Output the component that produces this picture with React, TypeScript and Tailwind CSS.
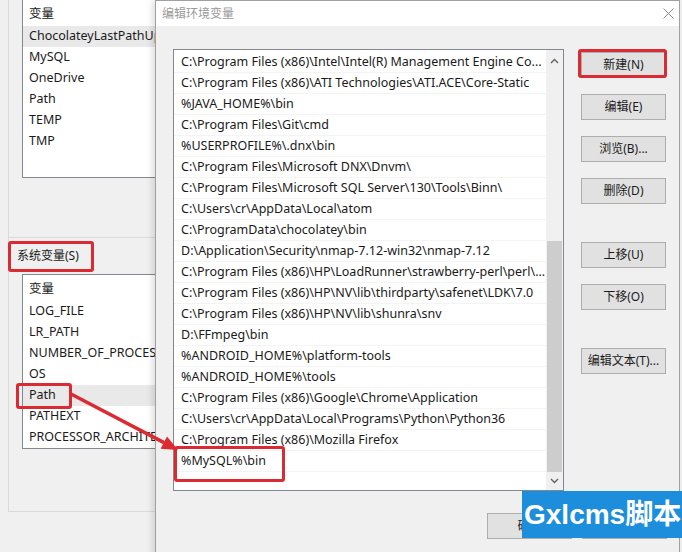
import React from 'react';

const userVars = ['ChocolateyLastPathUpdate', 'MySQL', 'OneDrive', 'Path', 'TEMP', 'TMP'];
const sysVars = ['LOG_FILE', 'LR_PATH', 'NUMBER_OF_PROCESSORS', 'OS', 'Path', 'PATHEXT', 'PROCESSOR_ARCHITECTURE'];

const paths = [
  'C:\\Program Files (x86)\\Intel\\Intel(R) Management Engine Co...',
  'C:\\Program Files (x86)\\ATI Technologies\\ATI.ACE\\Core-Static',
  '%JAVA_HOME%\\bin',
  'C:\\Program Files\\Git\\cmd',
  '%USERPROFILE%\\.dnx\\bin',
  'C:\\Program Files\\Microsoft DNX\\Dnvm\\',
  'C:\\Program Files\\Microsoft SQL Server\\130\\Tools\\Binn\\',
  'C:\\Users\\cr\\AppData\\Local\\atom',
  'C:\\ProgramData\\chocolatey\\bin',
  'D:\\Application\\Security\\nmap-7.12-win32\\nmap-7.12',
  'C:\\Program Files (x86)\\HP\\LoadRunner\\strawberry-perl\\perl\\...',
  'C:\\Program Files (x86)\\HP\\NV\\lib\\thirdparty\\safenet\\LDK\\7.0',
  'C:\\Program Files (x86)\\HP\\NV\\lib\\shunra\\snv',
  'D:\\FFmpeg\\bin',
  '%ANDROID_HOME%\\platform-tools',
  '%ANDROID_HOME%\\tools',
  'C:\\Program Files (x86)\\Google\\Chrome\\Application',
  'C:\\Users\\cr\\AppData\\Local\\Programs\\Python\\Python36',
  'C:\\Program Files (x86)\\Mozilla Firefox',
  '%MySQL%\\bin',
];

// 背景窗口里的变量列表
const VarList = ({ items, selected, height }: { items: string[]; selected: string; height: string }) => (
  <div className={`w-[220px] bg-white border border-[#828790] pt-[2px] ${height}`}>
    <div className="h-[24px] flex items-center pl-[6px]">变量</div>
    {items.map((v) => (
      <div
        key={v}
        className={`h-[21px] flex items-center pl-[6px] whitespace-nowrap ${v === selected ? 'bg-[#e9e9e9]' : ''}`}
      >
        {v}
      </div>
    ))}
  </div>
);

const Btn = ({ label }: { label: string }) => (
  <div className="w-[85px] h-[26px] flex items-center justify-center bg-[#e1e1e1] border border-[#adadad] whitespace-nowrap text-[12px]">
    {label}
  </div>
);

const Chevron = ({ up }: { up?: boolean }) => (
  <svg width="9" height="6" viewBox="0 0 9 6">
    <path d={up ? 'M1 5 L4.5 1.5 L8 5' : 'M1 1 L4.5 4.5 L8 1'} fill="none" stroke="#606060" strokeWidth="1.4" />
  </svg>
);

export default function App() {
  return (
    <div className="relative w-[682px] h-[552px] overflow-hidden bg-[#f0f0f0] text-[12.5px] text-[#1a1a1a] font-['Noto_Sans','Noto_Sans_CJK_SC',sans-serif]">
      {/* 背景：环境变量窗口 */}
      <div className="flex flex-col w-[400px] pl-[8px]">
        <div className="h-[239px] border-l border-b border-[#dadada] pl-[13px] -mt-px">
          <VarList items={userVars} selected="ChocolateyLastPathUpdate" height="h-[179px]" />
        </div>
        <div className="h-[274px] border-l border-b border-[#dadada]">
          <div className="h-[36px] flex items-center pl-[8px] text-[12px]">系统变量(S)</div>
          <div className="pl-[13px]">
            <VarList items={sysVars} selected="Path" height="h-[175px]" />
          </div>
        </div>
      </div>

      {/* 编辑环境变量 对话框 */}
      <div className="absolute left-[155px] top-0 w-[525px] h-[580px] bg-[#f0f0f0] border border-[#a0a0a0] shadow-[-3px_0_6px_rgba(0,0,0,0.12)] flex flex-col">
        <div className="h-[25px] bg-white flex items-center justify-between pl-[6px] pr-[5px]">
          <span className="text-[#9a9a9a] text-[12px]">编辑环境变量</span>
          <svg width="11" height="11" viewBox="0 0 11 11">
            <path d="M0.5 0.5 L10.5 10.5 M10.5 0.5 L0.5 10.5" stroke="#8a8a8a" strokeWidth="1" />
          </svg>
        </div>
        <div className="flex pl-[17px] pt-[23px] gap-[17px]">
          <div className="w-[391px] h-[442px] bg-white border border-[#828790] flex">
            <div className="flex-1 pt-[2px] min-w-0">
              {paths.map((p) => (
                <div key={p} className="h-[21px] flex items-center pl-[7px] whitespace-nowrap overflow-hidden border-b border-[#f4f4f4]">
                  {p}
                </div>
              ))}
            </div>
            <div className="w-[17px] bg-[#f0f0f0] flex flex-col items-center">
              <div className="h-[21px] flex items-center justify-center">
                <Chevron up />
              </div>
              <div className="flex-1 w-full flex flex-col justify-end px-px">
                <div className="h-[231px] bg-[#cdcdcd]" />
              </div>
              <div className="h-[18px] flex items-center justify-center">
                <Chevron />
              </div>
            </div>
          </div>
          <div className="flex flex-col pt-[3px]">
            <Btn label="新建(N)" />
            <div className="mt-[16px]"><Btn label="编辑(E)" /></div>
            <div className="mt-[16px]"><Btn label="浏览(B)..." /></div>
            <div className="mt-[16px]"><Btn label="删除(D)" /></div>
            <div className="mt-[38px]"><Btn label="上移(U)" /></div>
            <div className="mt-[16px]"><Btn label="下移(O)" /></div>
            <div className="mt-[38px]"><Btn label="编辑文本(T)..." /></div>
          </div>
        </div>
        <div className="flex justify-end gap-[10px] pr-[12px] mt-[22px]">
          <Btn label="确定" />
          <Btn label="取消" />
        </div>
      </div>

      {/* 红色标注 */}
      <div className="absolute left-[8px] top-[241px] w-[86px] h-[31px] border-[3px] border-[#dc2a32] rounded-[3px]" />
      <div className="absolute left-[16px] top-[383px] w-[56px] h-[26px] border-[3px] border-[#dc2a32] rounded-[3px]" />
      <div className="absolute left-[174px] top-[446px] w-[111px] h-[36px] border-[3px] border-[#dc2a32] rounded-[3px]" />
      <div className="absolute left-[578px] top-[49px] w-[89px] h-[29px] border-[3px] border-[#dc2a32] rounded-[3px]" />
      <svg className="absolute left-0 top-0 pointer-events-none" width="682" height="552">
        <line x1="71" y1="394" x2="164" y2="442.6" stroke="#dc2a32" strokeWidth="3.5" />
        <polygon points="178,450 160.6,448.8 167,436.4" fill="#dc2a32" />
      </svg>

      {/* 水印 */}
      <div className="absolute left-[522px] top-[491px] w-[160px] h-[47px] bg-[#1d8edb] flex items-center pl-[2px] text-white font-bold text-[28px] leading-none whitespace-nowrap overflow-hidden font-['Liberation_Sans','Noto_Sans_CJK_SC',sans-serif]">
        Gxlcms脚本
      </div>
    </div>
  );
}
